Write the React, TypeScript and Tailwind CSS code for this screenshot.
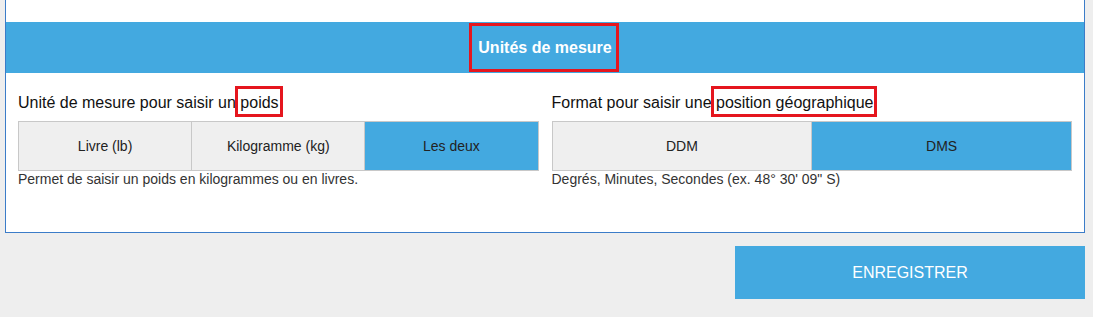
const font = { fontFamily: '"Liberation Sans", Arial, sans-serif' };

function Mark({ children }: { children: React.ReactNode }) {
  return (
    <span className="relative">
      {children}
      <span className="pointer-events-none absolute -left-[5px] -right-[4px] -top-[8px] -bottom-[6px] border-[3px] border-[#e5161e]" />
    </span>
  );
}

interface SegProps {
  options: string[];
  active: number;
}

function Segmented({ options, active }: SegProps) {
  return (
    <div className="flex h-[50px] border border-[#c8c8c8]">
      {options.map((o, i) => (
        <div
          key={o}
          className={`flex flex-1 items-center justify-center text-[14px] text-[#222] ${
            i > 0 ? 'border-l border-[#c8c8c8]' : ''
          } ${i === active ? 'bg-[#43a9e0]' : 'bg-[#efefef]'}`}
        >
          {o}
        </div>
      ))}
    </div>
  );
}

export default function App() {
  return (
    <div className="h-[317px] w-[1093px] overflow-hidden bg-[#eeeeee]" style={font}>
      <div className="ml-[5px] w-[1080px] border-x border-b border-[#3b7cc8] bg-white">
        <div className="h-[22px]" />
        <div className="flex h-[51px] items-center justify-center bg-[#43a9e0]">
          <span className="relative text-[16px] font-bold text-white">
            Unités de mesure
            <span className="pointer-events-none absolute -left-[9px] -right-[7px] -top-[13px] -bottom-[12px] border-[3px] border-[#e5161e]" />
          </span>
        </div>
        <div className="grid h-[159px] grid-cols-2 gap-[13px] px-[12px] pt-[20px]">
          <div>
            <div className="h-[28px] text-[16px] leading-[20px] text-[#111]">
              Unité de mesure pour saisir un <Mark>poids</Mark>
            </div>
            <Segmented options={['Livre (lb)', 'Kilogramme (kg)', 'Les deux']} active={2} />
            <div className="text-[14px] leading-[17px] text-[#333]">
              Permet de saisir un poids en kilogrammes ou en livres.
            </div>
          </div>
          <div>
            <div className="h-[28px] text-[16px] leading-[20px] text-[#111]">
              Format pour saisir une <Mark>position géographique</Mark>
            </div>
            <Segmented options={['DDM', 'DMS']} active={1} />
            <div className="text-[14px] leading-[17px] text-[#333]">
              Degrés, Minutes, Secondes (ex. 48° 30' 09" S)
            </div>
          </div>
        </div>
      </div>
      <div className="mt-[13px] flex justify-end pr-[8px]">
        <button className="h-[53px] w-[350px] bg-[#43a9e0] text-[16px] text-white">ENREGISTRER</button>
      </div>
    </div>
  );
}
